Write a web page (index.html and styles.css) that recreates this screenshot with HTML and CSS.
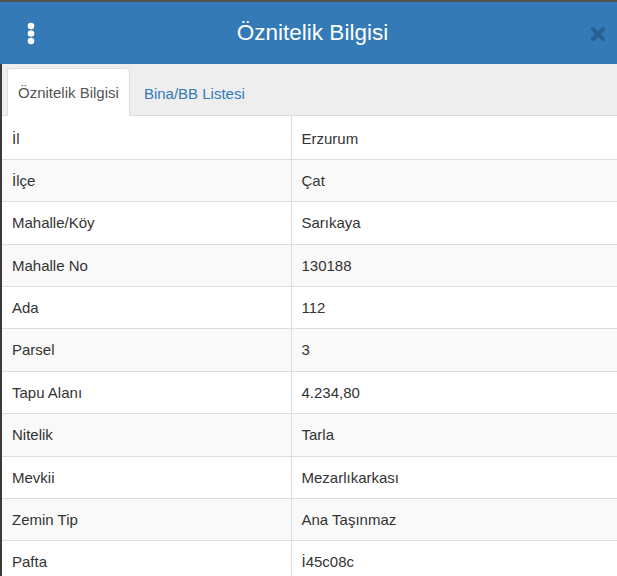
FILE: index.html
```html
<!DOCTYPE html>
<html lang="tr">
<head>
<meta charset="utf-8">
<link rel="stylesheet" href="styles.css">
</head>
<body>
<div class="panel">
  <div class="topline"></div>
  <header class="header">
    <span class="menu">
      <svg width="8" height="24" viewBox="0 0 8 24"><circle cx="4" cy="4" r="3.3" fill="#fff"/><circle cx="4" cy="11.5" r="3.3" fill="#fff"/><circle cx="4" cy="19" r="3.3" fill="#fff"/></svg>
    </span>
    <h1 class="title">Öznitelik Bilgisi</h1>
    <span class="close">
      <svg width="16" height="16" viewBox="0 0 16 16"><path d="M3 3 L13 13 M13 3 L3 13" stroke="#2a5f91" stroke-width="4" stroke-linecap="round"/></svg>
    </span>
  </header>
  <div class="body">
    <nav class="tabs">
      <span class="tab active">Öznitelik Bilgisi</span>
      <span class="tab">Bina/BB Listesi</span>
    </nav>
    <table class="attrs">
      <tbody>
        <tr><td>İl</td><td>Erzurum</td></tr>
        <tr><td>İlçe</td><td>Çat</td></tr>
        <tr><td>Mahalle/Köy</td><td>Sarıkaya</td></tr>
        <tr><td>Mahalle No</td><td>130188</td></tr>
        <tr><td>Ada</td><td>112</td></tr>
        <tr><td>Parsel</td><td>3</td></tr>
        <tr><td>Tapu Alanı</td><td>4.234,80</td></tr>
        <tr><td>Nitelik</td><td>Tarla</td></tr>
        <tr><td>Mevkii</td><td>Mezarlıkarkası</td></tr>
        <tr><td>Zemin Tip</td><td>Ana Taşınmaz</td></tr>
        <tr><td>Pafta</td><td>İ45c08c</td></tr>
      </tbody>
    </table>
  </div>
</div>
</body>
</html>
```
FILE: styles.css
```css
* { box-sizing: border-box; }
html, body {
  margin: 0;
  padding: 0;
  background: #fff;
  font-family: "Liberation Sans", Arial, sans-serif;
  font-size: 15px;
  color: #333;
  overflow: hidden;
}
.panel {
  width: 617px;
  height: 576px;
  overflow: hidden;
}
.topline {
  height: 2px;
  background: #55534f;
}
.header {
  height: 62px;
  background: #337ab7;
  display: flex;
  align-items: center;
  justify-content: space-between;
  padding: 0 11px 0 27px;
}
.menu {
  display: flex;
  width: 8px;
  margin-top: 1px;
}
.title {
  margin: 0;
  font-weight: normal;
  font-size: 22.5px;
  color: #fff;
  flex: 1;
  text-align: center;
}
.close {
  display: flex;
  margin-top: 2px;
}
.body {
  border-left: 2px solid #3a3a3a;
}
.tabs {
  height: 52px;
  background: #eee;
  border-bottom: 1px solid #ddd;
  display: flex;
  align-items: flex-end;
  padding-left: 5px;
}
.tab {
  height: 47px;
  line-height: 47px;
  padding: 0 10px 0 13px;
  color: #337ab7;
  margin-bottom: -1px;
  border: 1px solid transparent;
  border-bottom: none;
}
.tab.active {
  background: #fff;
  color: #555;
  border-color: #ddd;
  height: 48px;
  padding: 0 10px;
  border-radius: 3px 3px 0 0;
}
.attrs {
  border-collapse: collapse;
  width: 640px;
  table-layout: fixed;
}
.attrs td {
  padding: 11px 10px 10.4px;
  line-height: 20px;
  border-top: 1px solid #ddd;
  vertical-align: top;
}
.attrs tr:first-child td {
  border-top: none;
  padding-top: 12.5px;
}
.attrs td:first-child {
  width: 289px;
  border-right: 1px solid #ddd;
}
.attrs td:last-child {
  padding-left: 10px;
}
.attrs tr:nth-child(even) td { background: #f9f9f9; }
```
